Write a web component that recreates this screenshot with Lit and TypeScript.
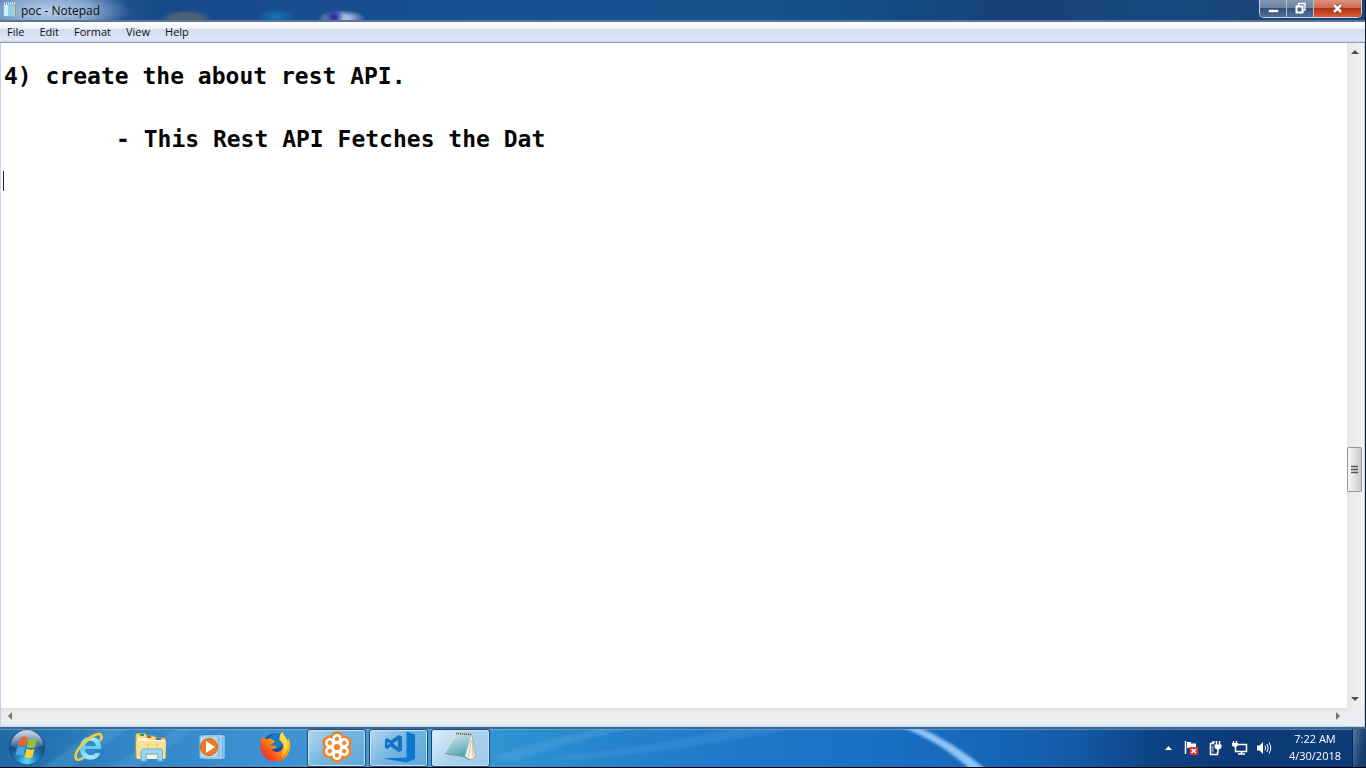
import { LitElement, html, svg, css } from "lit";
import { customElement, property } from "lit/decorators.js";

const startOrb = html`<svg width="38" height="38" viewBox="0 0 38 38" aria-hidden="true">
  <defs>
    <radialGradient id="orb" cx="50%" cy="90%" r="80%">
      <stop offset="0" stop-color="#5fe0fa" /><stop offset=".35" stop-color="#2186c4" />
      <stop offset=".75" stop-color="#174a80" /><stop offset="1" stop-color="#4f7ca6" />
    </radialGradient>
    <linearGradient id="gloss" x2="0" y2="1">
      <stop offset="0" stop-color="#fff" stop-opacity=".7" /><stop offset="1" stop-color="#fff" stop-opacity=".1" />
    </linearGradient>
  </defs>
  <circle cx="19" cy="18.500" r="17.500" fill="url(#orb)" stroke="#1d4f80" />
  <path d="M3 17A16 16 0 0 1 35 17Q19 22 3 17Z" fill="url(#gloss)" />
  <path d="M12.500 9Q15.500 6.500 19.500 8.500L17.700 17Q14 15 9.500 17.200Z" fill="#ee6230" />
  <path d="M20.500 9.500Q24.500 12 29 9.500L27 18Q23 20.200 18.900 18Z" fill="#93c43a" />
  <path d="M9.200 18.500Q13.500 16.500 17.300 18.500L15.300 27Q12 25 7.500 26.500Z" fill="#49a8e8" />
  <path d="M18.700 19.500Q22.500 21.700 26.500 19.700L24.500 28Q20.500 30.500 16.500 28Z" fill="#fdcf35" />
</svg>`;

const ieIcon = html`<svg width="32" height="32" viewBox="0 0 32 32" aria-hidden="true">
  <defs><linearGradient id="ie" x2="0" y2="1"><stop offset="0" stop-color="#b8f0ff" /><stop offset=".5" stop-color="#5fcaf5" /><stop offset="1" stop-color="#b6ecff" /></linearGradient></defs>
  <path d="M28.500 18.500H12.500C12.800 22.300 15 23.500 18 23.500C20.500 23.500 21.800 22.800 22.500 21.500H28C26.200 26 22.800 29 17.500 29C11 29 6.500 24.500 6.500 17.200C6.500 10 11.500 5.500 17.500 5.500C24.800 5.500 29 10.500 28.500 18.500ZM12.700 14.500H22.300C22 11.800 20.300 10.300 17.600 10.300C15 10.300 13.200 11.800 12.700 14.500Z" fill="url(#ie)" stroke="#2283c4" stroke-width=".8" />
  <path d="M27.500 9C30 4.500 27.800 1.500 22.500 3.800C13 7.800 3 19 2.500 25.200C2.200 29.500 6 29.500 10 27" fill="none" stroke="#f5cc38" stroke-width="2.600" stroke-linecap="round" />
</svg>`;

const folderIcon = html`<svg width="34" height="32" viewBox="0 0 34 32" aria-hidden="true">
  <path d="M2 4Q2 2.500 3.500 2.500H11L13 5H20L22 7H30Q31.500 7 31.500 8.500V27H2Z" fill="#f3d97f" stroke="#c9a548" />
  <path d="M6 3H10V5H6Z" fill="#2e9c55" /><path d="M13 5H17V7H13Z" fill="#d94f35" /><path d="M22 7H27V9H22Z" fill="#3977bb" />
  <path d="M4 7H13L15 9H30V12H4Z" fill="#fff7d8" />
  <path d="M2 10H32L31 28H3Z" fill="#f8e294" />
  <path d="M14 12V20M23 12V20" stroke="#e5c668" />
  <path d="M8 19.500Q8 18 9.500 18H27Q28.500 18 28.500 19.500V30H24V23H12V30H7V21Z" fill="#9fd4f3" stroke="#6aaedb" />
  <path d="M13 24H23V28H13Z" fill="#e9f6fd" opacity=".8" />
</svg>`;

const mediaIcon = html`<svg width="30" height="30" viewBox="0 0 30 30" aria-hidden="true">
  <path d="M8 4H26V26H8Z" fill="#6fb0de" stroke="#b9dcf2" /><path d="M5 4H23V26H5Z" fill="#8cc3ea" stroke="#c9e5f6" />
  <path d="M2 4H20V26H2Z" fill="#b4daf2" stroke="#8abde0" />
  <circle cx="11" cy="15" r="8.500" fill="#f27a1e" stroke="#d7620d" /><path d="M8 9L17 15L8 21Z" fill="#fff" />
</svg>`;

const firefoxIcon = html`<svg width="32" height="32" viewBox="0 0 32 32" aria-hidden="true">
  <defs>
    <linearGradient id="fox" x1="1" x2="0" y2="1"><stop offset="0" stop-color="#ffe226" /><stop offset=".45" stop-color="#ff980e" /><stop offset=".75" stop-color="#f34526" /><stop offset="1" stop-color="#dc1858" /></linearGradient>
  </defs>
  <circle cx="16" cy="14" r="11.500" fill="#1e4d9e" />
  <circle cx="17" cy="10" r="7.500" fill="#1579c8" />
  <path d="M4 5C5 7 6 8 7 8.500C9 7 12 7.500 13 8.500L16 10C15 12.500 12 12.500 11.500 14.500C14 14 16 15 18 16C16 18 14.500 18.500 12.500 18C14 21.500 19 22 22 19.500C26 16 23.500 11 20.500 9C20.500 5 21.500 2.500 23.500 1C24 4 27 6 28.500 9.500C29.500 9 29.500 8 29.500 7C32 12 31.500 19 29 23C26 28.500 21 31 15.500 30.500C7 30 1 23 1.500 15C1.500 11 2.500 7 4 5Z" fill="url(#fox)" />
  <path d="M20.500 9C20.500 5 21.500 2.500 23.500 1C24 4 27 6 28 10C30 16 27 23 22 25C27 19 26 13 20.500 9Z" fill="#ffe047" opacity=".85" />
</svg>`;

const petals = [0, 60, 120, 180, 240, 300];
const flowerIcon = html`<svg width="32" height="32" viewBox="0 0 32 32" aria-hidden="true">
  ${petals.map((a) => svg`<circle cx="16" cy="7" r="6.800" fill="#ef8129" transform="rotate(${a} 16 16)" />`)}
  <circle cx="16" cy="16" r="9" fill="#ef8129" />
  ${petals.map((a) => svg`<circle cx="16" cy="7.700" r="3.500" fill="#ef8a35" stroke="#fff" stroke-width="2.600" transform="rotate(${a} 16 16)" />`)}
  <circle cx="16" cy="16" r="4.200" fill="#ef8129" stroke="#fff" stroke-width="2.200" />
</svg>`;

const codeIcon = html`<svg width="34" height="32" viewBox="0 0 34 32" aria-hidden="true">
  <path d="M24.500 0.500L33 3.500V28L24.500 31.500L1 27.500L24.500 26.500Z" fill="#0b78d0" />
  <path d="M16.500 4L20 5.500V19.500L16.500 21L8.700 15.400L5.500 18L3 16.800V8.200L5.500 7L8.700 9.600ZM16 9L11 12.500L16 16.200ZM5.500 10.200V14.800L7.500 12.500Z" fill="#1373c0" fill-rule="evenodd" />
</svg>`;

const noteIcon = html`<svg width="34" height="32" viewBox="0 0 34 32" aria-hidden="true">
  <defs><linearGradient id="note" x1=".3" x2=".7" y2="1"><stop offset="0" stop-color="#dbe9ea" /><stop offset=".5" stop-color="#92c3cc" /><stop offset="1" stop-color="#4a9fb4" /></linearGradient></defs>
  <path d="M28 3L31.500 26L26 29L20 25.500Z" fill="#f5f3ea" stroke="#a49c86" stroke-width=".8" />
  <path d="M12 2L28 3L21 26L1 22.500Z" fill="url(#note)" stroke="#ddeaec" stroke-width=".8" />
  <path d="M12 2.500L28 3.500" stroke="#6f6d5d" stroke-width="2" stroke-dasharray="1.300 .7" />
  <path d="M1 22.500L21 26L26 29" fill="none" stroke="#6b8f95" />
  <path d="M27.500 9L24.500 26M28.500 10L29 26" stroke="#c9c2ac" />
</svg>`;

@customElement("notepad-window")
export class NotepadWindow extends LitElement {
  @property() name = "poc - Notepad";
  @property() text = "\n4) create the about rest API.\n\n\n\t- This Rest API Fetches the Dat\n\n";

  static styles = css`
    :host { display: flex; flex-direction: column; min-height: 0; border-right: 1px solid #101a26; font-family: "Open Sans", "Noto Sans", sans-serif; color: #111; }
    button { font: inherit; color: inherit; border: 0; padding: 0; margin: 0; background: none; }
    svg { display: block; }
    .title {
      display: flex; align-items: center; height: 20px; padding-left: 2px; gap: 5px; font-size: 12px;
      background:
        radial-gradient(ellipse 80px 24px at 50px 11px, #c3d6ecee, #9bb8dacc 55%, transparent),
        radial-gradient(ellipse 26px 9px at 186px 19px, #4b6274 60%, transparent),
        radial-gradient(ellipse 20px 9px at 276px 17px, #1873b9, transparent),
        radial-gradient(ellipse 10px 8px at 334px 17px, #2c2f9c 20%, transparent),
        radial-gradient(ellipse 24px 8px at 342px 18px, #aab9df 30%, transparent),
        linear-gradient(90deg, #3c67a3, #174a8a 12%, #184f91 30%, #17538f 55%, #144a86 66%, #184177 74%, #174980 86%, #184477 92%);
    }
    .caption { margin: 0; font-size: 12px; font-weight: 400; line-height: 20px; padding-top: 1px; flex: 1; }
    .controls { display: flex; align-self: flex-start; margin-right: 3px; height: 17px; border: 1px solid #c7d3e2; border-top: 0; border-radius: 0 0 5px 5px; overflow: hidden; }
    .controls button { width: 27px; display: grid; place-items: center; border-right: 1px solid #b3c0d0; background: linear-gradient(#8397b0, #6d84a1 45%, #35537a 50%, #526f94); }
    .controls .close { width: 47px; border-right: 0; background: linear-gradient(#dc9280, #cf6a50 45%, #b52f14 50%, #d95f35); }
    .menu { display: flex; gap: 1px; align-items: center; height: 20px; font-size: 11px; border-top: 2px solid #5c7496; border-bottom: 1px solid #7fa1bb; background: linear-gradient(#fff, #eef1fa 34%, #d3dbef 36%, #dee6f6 90%, #cbd0da); }
    .menu button { padding: 0 7px; line-height: 18px; }
    .body { flex: 1; min-height: 0; display: grid; grid-template: minmax(0, 1fr) 18px / minmax(0, 1fr) 17px; border: 1px solid #bcd3ec; border-top: 0; border-right-color: #b4dcf2; position: relative; background: #ededee; }
    textarea { resize: none; border: 0; outline: 0; margin: 0; padding: 2px 3px; overflow: hidden; background: #fff; color: #050505; font: bold 23px/21px "DejaVu Sans Mono", "Liberation Mono", monospace; tab-size: 112px; white-space: pre; }
    .caret { position: absolute; left: 2px; top: 128px; width: 1px; height: 20px; background: #222; }
    .vbar { display: grid; grid-template-rows: 17px 388fr 45px 199fr 17px; justify-items: center; align-items: center; background: linear-gradient(90deg, #e7e7e8, #f2f2f2); padding-right: 2px; }
    .vbar .thumb { grid-row: 3; width: 15px; height: 45px; border: 1px solid #969698; border-radius: 2px; display: grid; place-items: center; background: linear-gradient(90deg, #f7f7f7, #e3e3e4 50%, #c9c9cc); box-sizing: border-box; }
    .vbar .down { grid-row: 5; }
    .hbar { display: flex; justify-content: space-between; align-items: center; padding: 0 6px 3px; background: linear-gradient(#dfdfe0, #ececed 25%, #eeeeef 75%, #dcebf8); box-sizing: border-box; }
    .corner { background: #ecedf0; }
  `;

  render() {
    return html`
      <header class="title">
        <svg width="14" height="16" viewBox="0 0 14 16" aria-hidden="true">
          <path d="M1 2H13V15H1Z" fill="#8fd0e2" stroke="#5d93a8" /><path d="M2 3H6V14H2Z" fill="#d0eef4" />
          <path d="M2 1.500H13" stroke="#f4f7f8" stroke-width="2" stroke-dasharray="1 1" /><path d="M12.500 4V15" stroke="#dfc98d" />
        </svg>
        <h1 class="caption">${this.name}</h1>
        <div class="controls">
          <button aria-label="Minimize"><svg width="13" height="13"><path d="M1.500 7.500H11.500V10.500H1.500Z" fill="#fff" stroke="#405168" stroke-width=".6" /></svg></button>
          <button aria-label="Restore"><svg width="13" height="13"><path d="M4.500 4V1.500H11V8H9" fill="none" stroke="#fff" stroke-width="1.300" /><path d="M2.500 4.500H8.500V10.500H2.500Z" fill="#49678e" stroke="#fff" stroke-width="2" /></svg></button>
          <button class="close" aria-label="Close"><svg width="13" height="13"><path d="M3 3L10 10M10 3L3 10" stroke="#74392b" stroke-width="4" /><path d="M3 3L10 10M10 3L3 10" stroke="#fff" stroke-width="2.500" /></svg></button>
        </div>
      </header>
      <nav class="menu">${["File", "Edit", "Format", "View", "Help"].map((m) => html`<button>${m}</button>`)}</nav>
      <div class="body">
        <textarea aria-label="Document text" spellcheck="false" .value=${this.text}></textarea>
        <span class="caret"></span>
        <div class="vbar">
          <button aria-label="Scroll up"><svg width="8" height="5"><path d="M0 5L4 1L8 5Z" fill="#505050" /></svg></button>
          <div class="thumb"><svg width="8" height="9"><path d="M0 1.500H7M0 4.500H7M0 7.500H7" stroke="#555" stroke-width="1.500" /></svg></div>
          <button class="down" aria-label="Scroll down"><svg width="8" height="5"><path d="M0 0L4 4L8 0Z" fill="#505050" /></svg></button>
        </div>
        <div class="hbar">
          <button aria-label="Scroll left"><svg width="5" height="8"><path d="M5 0L1 4L5 8Z" fill="#777" /></svg></button>
          <button aria-label="Scroll right"><svg width="5" height="8"><path d="M0 0L4 4L0 8Z" fill="#777" /></svg></button>
        </div>
        <div class="corner"></div>
      </div>`;
  }
}

@customElement("task-bar")
export class TaskBar extends LitElement {
  static styles = css`
    :host {
      display: flex; height: 38px; position: relative; overflow: hidden; border-top: 2px solid #42658c; border-bottom: 1px solid #000;
      font: 11px/17px "Open Sans", "Noto Sans", sans-serif; color: #fff;
      background: linear-gradient(90deg, #2069a8, #2574b4 4%, #3386c6 9%, #3c8fd0 18%, #449bd8 30%, #2f93d2 37%, #2586cd 44%, #2079cb 53%, #1a70c5 64%, #1767b9 72%, #145aa7 79%, #0e4487 84%, #0b3a77 90%, #0c3b78);
    }
    button { font: inherit; color: inherit; border: 0; padding: 0; margin: 0; background: none; display: grid; place-items: center; }
    svg { display: block; }
    .sky { position: absolute; inset: 0; width: 100%; height: 100%; }
    .start, .apps, .tray { position: relative; }
    .start { width: 54px; }
    .apps { display: flex; gap: 3px; margin-left: 5px; flex: 1; }
    .apps button { width: 59px; padding-bottom: 2px; }
    .apps .open { box-sizing: border-box; border: 1px solid #1f4c73; border-radius: 3px; box-shadow: inset 0 0 0 1px #c6e3f6; background: linear-gradient(135deg, #b5d9f0, #76b7e2 45%, #5ba7db); }
    .apps .active { background: linear-gradient(135deg, #e1f0fa, #a9d2ee 50%, #9bc9e8); }
    .tray { display: flex; align-items: center; gap: 8px; }
    .clock { text-align: center; margin: 0 2px 0 8px; padding-bottom: 2px; width: 54px; }
    .clock time { display: block; }
    .peek { align-self: stretch; width: 14px; border-left: 1px solid #0a264a; background: linear-gradient(100deg, #54779f, #1b4372 60%, #123765); }
  `;

  render() {
    const pinned: [string, unknown, string][] = [
      ["Internet Explorer", ieIcon, ""],
      ["Windows Explorer", folderIcon, ""],
      ["Media Player", mediaIcon, ""],
      ["Firefox", firefoxIcon, ""],
      ["GoToMeeting", flowerIcon, "open"],
      ["Visual Studio Code", codeIcon, "open"],
      ["Notepad", noteIcon, "open active"],
    ];
    return html`
      <svg class="sky" viewBox="0 0 1366 38" preserveAspectRatio="none" aria-hidden="true">
        <defs><filter id="soft"><feGaussianBlur stdDeviation="1.500" /></filter></defs>
        <path d="M0 0.500H1366" stroke="#8fc0e6" opacity=".5" />
        <g filter="url(#soft)">
          <path d="M899 -3Q940 12 972 42L988 42Q952 12 916 -3Z" fill="#8ec5fa" />
          <path d="M490 30Q540 10 610 -2L640 -2Q560 14 515 32Z" fill="#5fb0e6" opacity=".3" />
          <path d="M550 28Q640 20 740 -2L800 -2Q670 24 560 32Z" fill="#5fa5e4" opacity=".25" />
          <path d="M40 40L100 -2H130L70 40Z" fill="#6cb6e8" opacity=".25" />
          <path d="M105 40L180 -2H200L135 40Z" fill="#6cb6e8" opacity=".2" />
        </g>
      </svg>
      <button class="start" aria-label="Start">${startOrb}</button>
      <nav class="apps">${pinned.map(([label, icon, cls]) => html`<button class=${cls} aria-label=${label}>${icon}</button>`)}</nav>
      <div class="tray">
        <button aria-label="Show hidden icons"><svg width="11" height="16"><path d="M1 10L4.500 6L8 10Z" fill="#fff" /></svg></button>
        <button aria-label="Action Center"><svg width="16" height="16"><path d="M2.500 1V14" stroke="#fff" stroke-width="1.500" /><path d="M4 2H8V3.500H13V9.500H8V8H4Z" fill="#fff" /><path d="M6.500 7H15V15H6.500Z" fill="#d8352a" /><path d="M8.500 9L13 13M13 9L8.500 13" stroke="#fff" stroke-width="1.500" /></svg></button>
        <button aria-label="Power"><svg width="16" height="16"><path d="M7 3.500H3.500V14.500H10.500V12M5 2H8" fill="none" stroke="#fff" stroke-width="1.500" /><path d="M9.500 1V5M12.500 1V5" stroke="#fff" stroke-width="1.500" /><path d="M7.500 4.500H14.500V7Q14 9 11.700 9.500V13H10.200V9.500Q8 9 7.500 7Z" fill="#fff" /><path d="M5 6H6.500V12.500H5Z" fill="#fff" opacity=".5" /></svg></button>
        <button aria-label="Network"><svg width="17" height="16"><path d="M7 4.500H15.500V11.500H4.500V6" fill="none" stroke="#fff" stroke-width="1.500" /><path d="M7 14H14M10.500 12V14M2.500 1V3M5.500 1V3" stroke="#fff" stroke-width="1.500" /><path d="M1 3H7V5.500L5 7H3L1 5.500Z" fill="#fff" /></svg></button>
        <button aria-label="Volume"><svg width="16" height="16"><path d="M1 5.500H3.500L7 2V14L3.500 10.500H1Z" fill="#fff" /><path d="M9 5.500Q10.500 8 9 10.500M11 4Q13.500 8 11 12M13 2.500Q16.500 8 13 13.500" fill="none" stroke="#fff" /></svg></button>
        <div class="clock"><time>7:22 AM</time><time>4/30/2018</time></div>
        <button class="peek" aria-label="Show desktop"></button>
      </div>`;
  }
}

@customElement("app-root")
export class AppRoot extends LitElement {
  static styles = css`
    :host { display: flex; flex-direction: column; height: 100vh; background: #000; overflow: hidden; }
    notepad-window { flex: 1; }
  `;
  render() {
    return html`<notepad-window></notepad-window><task-bar></task-bar>`;
  }
}
